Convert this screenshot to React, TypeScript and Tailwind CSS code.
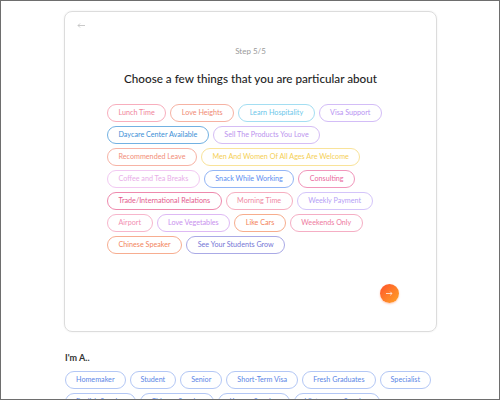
import React from "react";

type chip = {
  label: string;
  color: string;
};

const chips: chip[] = [
  { label: "Lunch Time", color: "border-[#f8aebd] text-[#f0839a]" },
  { label: "Love Heights", color: "border-[#f6b2a3] text-[#f08a74]" },
  { label: "Learn Hospitality", color: "border-[#a4def2] text-[#6cc7ea]" },
  { label: "Visa Support", color: "border-[#d3bdf7] text-[#b894f2]" },
  { label: "Daycare Center Available", color: "border-[#72b1e2] text-[#3d90d6]" },
  { label: "Sell The Products You Love", color: "border-[#d5bdf5] text-[#bb93ee]" },
  { label: "Recommended Leave", color: "border-[#f7b3a5] text-[#f28e78]" },
  { label: "Men And Women Of All Ages Are Welcome", color: "border-[#f9e39a] text-[#f5cf55]" },
  { label: "Coffee and Tea Breaks", color: "border-[#f2c9f2] text-[#e8aee8]" },
  { label: "Snack While Working", color: "border-[#93b5f5] text-[#5d8ef0]" },
  { label: "Consulting", color: "border-[#f196bb] text-[#ea6a9e]" },
  { label: "Trade/International Relations", color: "border-[#ee89ad] text-[#e45b8d]" },
  { label: "Morning Time", color: "border-[#f6aec0] text-[#f08aa5]" },
  { label: "Weekly Payment", color: "border-[#d4c5fa] text-[#b59ff6]" },
  { label: "Airport", color: "border-[#f7b6cc] text-[#f28fb2]" },
  { label: "Love Vegetables", color: "border-[#deb9f4] text-[#c991ee]" },
  { label: "Like Cars", color: "border-[#f7ad8d] text-[#f3835a]" },
  { label: "Weekends Only", color: "border-[#f5aec4] text-[#ee7aa0]" },
  { label: "Chinese Speaker", color: "border-[#f7ad90] text-[#f28560]" },
  { label: "See Your Students Grow", color: "border-[#aaaae6] text-[#7676d6]" },
];

const roles = [
  "Homemaker",
  "Student",
  "Senior",
  "Short-Term Visa",
  "Fresh Graduates",
  "Specialist",
  "English Speaker",
  "Chinese Speaker",
  "Korean Speaker",
  "Vietnamese Speaker",
];

export default function App() {
  return (
    <div
      className="w-[500px] h-[400px] overflow-hidden border border-[#6e6e6e] bg-white"
      style={{ fontFamily: "Lato, 'Noto Sans', sans-serif" }}
    >
      <div className="w-[373px] ml-[63px] pt-[10px]">
        {/* Card */}
        <div className="h-[321px] rounded-[8px] border border-[#dcdcdc] shadow-[0_0_2px_rgba(0,0,0,0.08)] flex flex-col">
          <div className="pl-[12px] pt-[11px] h-[28px]">
            <svg width="8" height="5" viewBox="0 0 8 5" fill="none" stroke="#c4c4c4" strokeWidth="0.9">
              <path d="M8 2.5H1M3 0.5L1 2.5L3 4.5" />
            </svg>
          </div>
          <div className="text-center text-[8px] text-[#9a9a9a] leading-[10px] mt-[6px]">Step 5/5</div>
          <h1 className="text-center text-[11.7px] font-medium text-[#1e1e1e] leading-[18px] mt-[13px]">
            Choose a few things that you are particular about
          </h1>
          <div className="w-[287px] mx-auto mt-[17px] flex flex-wrap gap-[4px]">
            {chips.map((c) => (
              <div
                key={c.label}
                className={`h-[18px] flex items-center px-[10.5px] rounded-full border text-[7.2px] leading-none whitespace-nowrap ${c.color}`}
              >
                {c.label}
              </div>
            ))}
          </div>
          <div className="flex-1" />
          <div className="flex justify-end pr-[37px] pb-[28px]">
            <button className="w-[19px] h-[19px] rounded-full bg-gradient-to-br from-[#ff4f2a] to-[#ffa226] flex items-center justify-center shadow-[0_1px_2px_rgba(255,90,40,0.35)]">
              <svg width="7" height="5" viewBox="0 0 7 5" fill="none" stroke="#ffe3d6" strokeWidth="0.9">
                <path d="M0 2.5H6M4.2 0.7L6 2.5L4.2 4.3" />
              </svg>
            </button>
          </div>
        </div>

        {/* I'm A.. */}
        <div className="mt-[20px] pl-[1px] text-[9px] font-bold text-[#333] leading-[12px]">I'm A..</div>
        <div className="mt-[7px] pl-[1px] flex flex-wrap gap-x-[4px] gap-y-[4px] w-[374px]">
          {roles.map((r) => (
            <div
              key={r}
              className="h-[18px] flex items-center px-[10px] rounded-full border border-[#b3c7f5] text-[#5b86e6] text-[7.2px] leading-none whitespace-nowrap"
            >
              {r}
            </div>
          ))}
        </div>
      </div>
    </div>
  );
}
